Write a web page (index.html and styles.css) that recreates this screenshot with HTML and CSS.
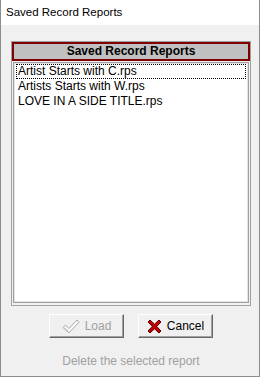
FILE: index.html
```html
<!DOCTYPE html>
<html lang="en">
<head>
    <meta charset="UTF-8">
    <meta name="viewport" content="width=device-width, initial-scale=1.0">
    <title>Saved Record Reports</title>
    <link rel="stylesheet" href="styles.css">
</head>
<body>
    <div class="window">
        <div class="titlebar">Saved Record Reports</div>
        <div class="client">
            <div class="panel">
                <div class="panel-head">Saved Record Reports</div>
                <ul class="report-list">
                    <li class="selected">Artist Starts with C.rps</li>
                    <li>Artists Starts with W.rps</li>
                    <li>LOVE IN A SIDE TITLE.rps</li>
                </ul>
            </div>
            <div class="buttons">
                <button class="btn" disabled>
                    <svg width="18" height="15" viewBox="0 0 18 15">
                        <path d="M1 8.5 L3.5 6 L7 9.5 L15 1 L17 3.2 L7 13.8 Z" fill="#fafafa" stroke="#a8a8a8" stroke-width="1" stroke-linejoin="round"/>
                        <path d="M2.6 8.5 L7 12.6" stroke="#d0d0d0" stroke-width="1" fill="none"/>
                    </svg>
                    Load
                </button>
                <button class="btn">
                    <svg width="15" height="15" viewBox="0 0 15 15">
                        <path d="M1 3 L3 1 L7.5 5.2 L12 1 L14 3 L9.7 7.5 L14 12 L12 14 L7.5 9.8 L3 14 L1 12 L5.3 7.5 Z" fill="#c00000" stroke="#5a0000" stroke-width="1" stroke-linejoin="round"/>
                    </svg>
                    Cancel
                </button>
            </div>
            <p class="hint">Delete the selected report</p>
        </div>
    </div>
</body>
</html>
```

FILE: styles.css
```css
body {
    margin: 0;
    background: #ffffff;
    font-family: "Liberation Sans", Arial, sans-serif;
    font-size: 12px;
    color: #000000;
}
.window {
    box-sizing: border-box;
    width: 260px;
    height: 377px;
    border: 1px solid #8c8c8c;
    border-top: none;
    display: flex;
    flex-direction: column;
}
.titlebar {
    height: 25px;
    line-height: 25px;
    padding-left: 5px;
    background: #ffffff;
    font-size: 11.5px;
}
.client {
    flex: 1;
    background: #f0f0f0;
    padding: 16px 8px 0 10px;
}
/* Sunken frame holding the header and the list */
.panel {
    box-sizing: border-box;
    height: 265px;
    border: 1px solid #a0a0a0;
    display: flex;
    flex-direction: column;
}
.panel-head {
    box-sizing: border-box;
    height: 19px;
    line-height: 15px;
    border: 2px solid #800000;
    background: #c0c0c0;
    font-weight: bold;
    text-align: center;
}
.report-list {
    flex: 1;
    list-style: none;
    margin: 1px 1px 2px;
    padding: 1px 2px;
    background: #ffffff;
    border: 1px solid #a0a0a0;
    box-shadow: inset 1px 1px 0 #e3e3e3, inset -1px -1px 0 #e3e3e3;
}
.report-list li {
    height: 15px;
    line-height: 15px;
    padding-left: 2px;
}
.report-list li.selected {
    outline: 1px dotted #000000;
    outline-offset: -1px;
}
.buttons {
    display: flex;
    justify-content: center;
    gap: 14px;
    margin-top: 8px;
}
.btn {
    box-sizing: border-box;
    width: 75px;
    height: 24px;
    padding: 0;
    display: flex;
    align-items: center;
    justify-content: center;
    gap: 5px;
    background: #f0f0f0;
    border: 1px solid;
    border-color: #ffffff #696969 #696969 #ffffff;
    box-shadow: inset -1px -1px 0 #a0a0a0, 0 0 0 0 transparent;
    font-family: "Liberation Sans", Arial, sans-serif;
    font-size: 12px;
    color: #000000;
}
.btn:disabled {
    color: #a0a0a0;
}
.hint {
    margin: 16px 0 0;
    line-height: 14px;
    text-align: center;
    color: #a0a0a0;
}
```
